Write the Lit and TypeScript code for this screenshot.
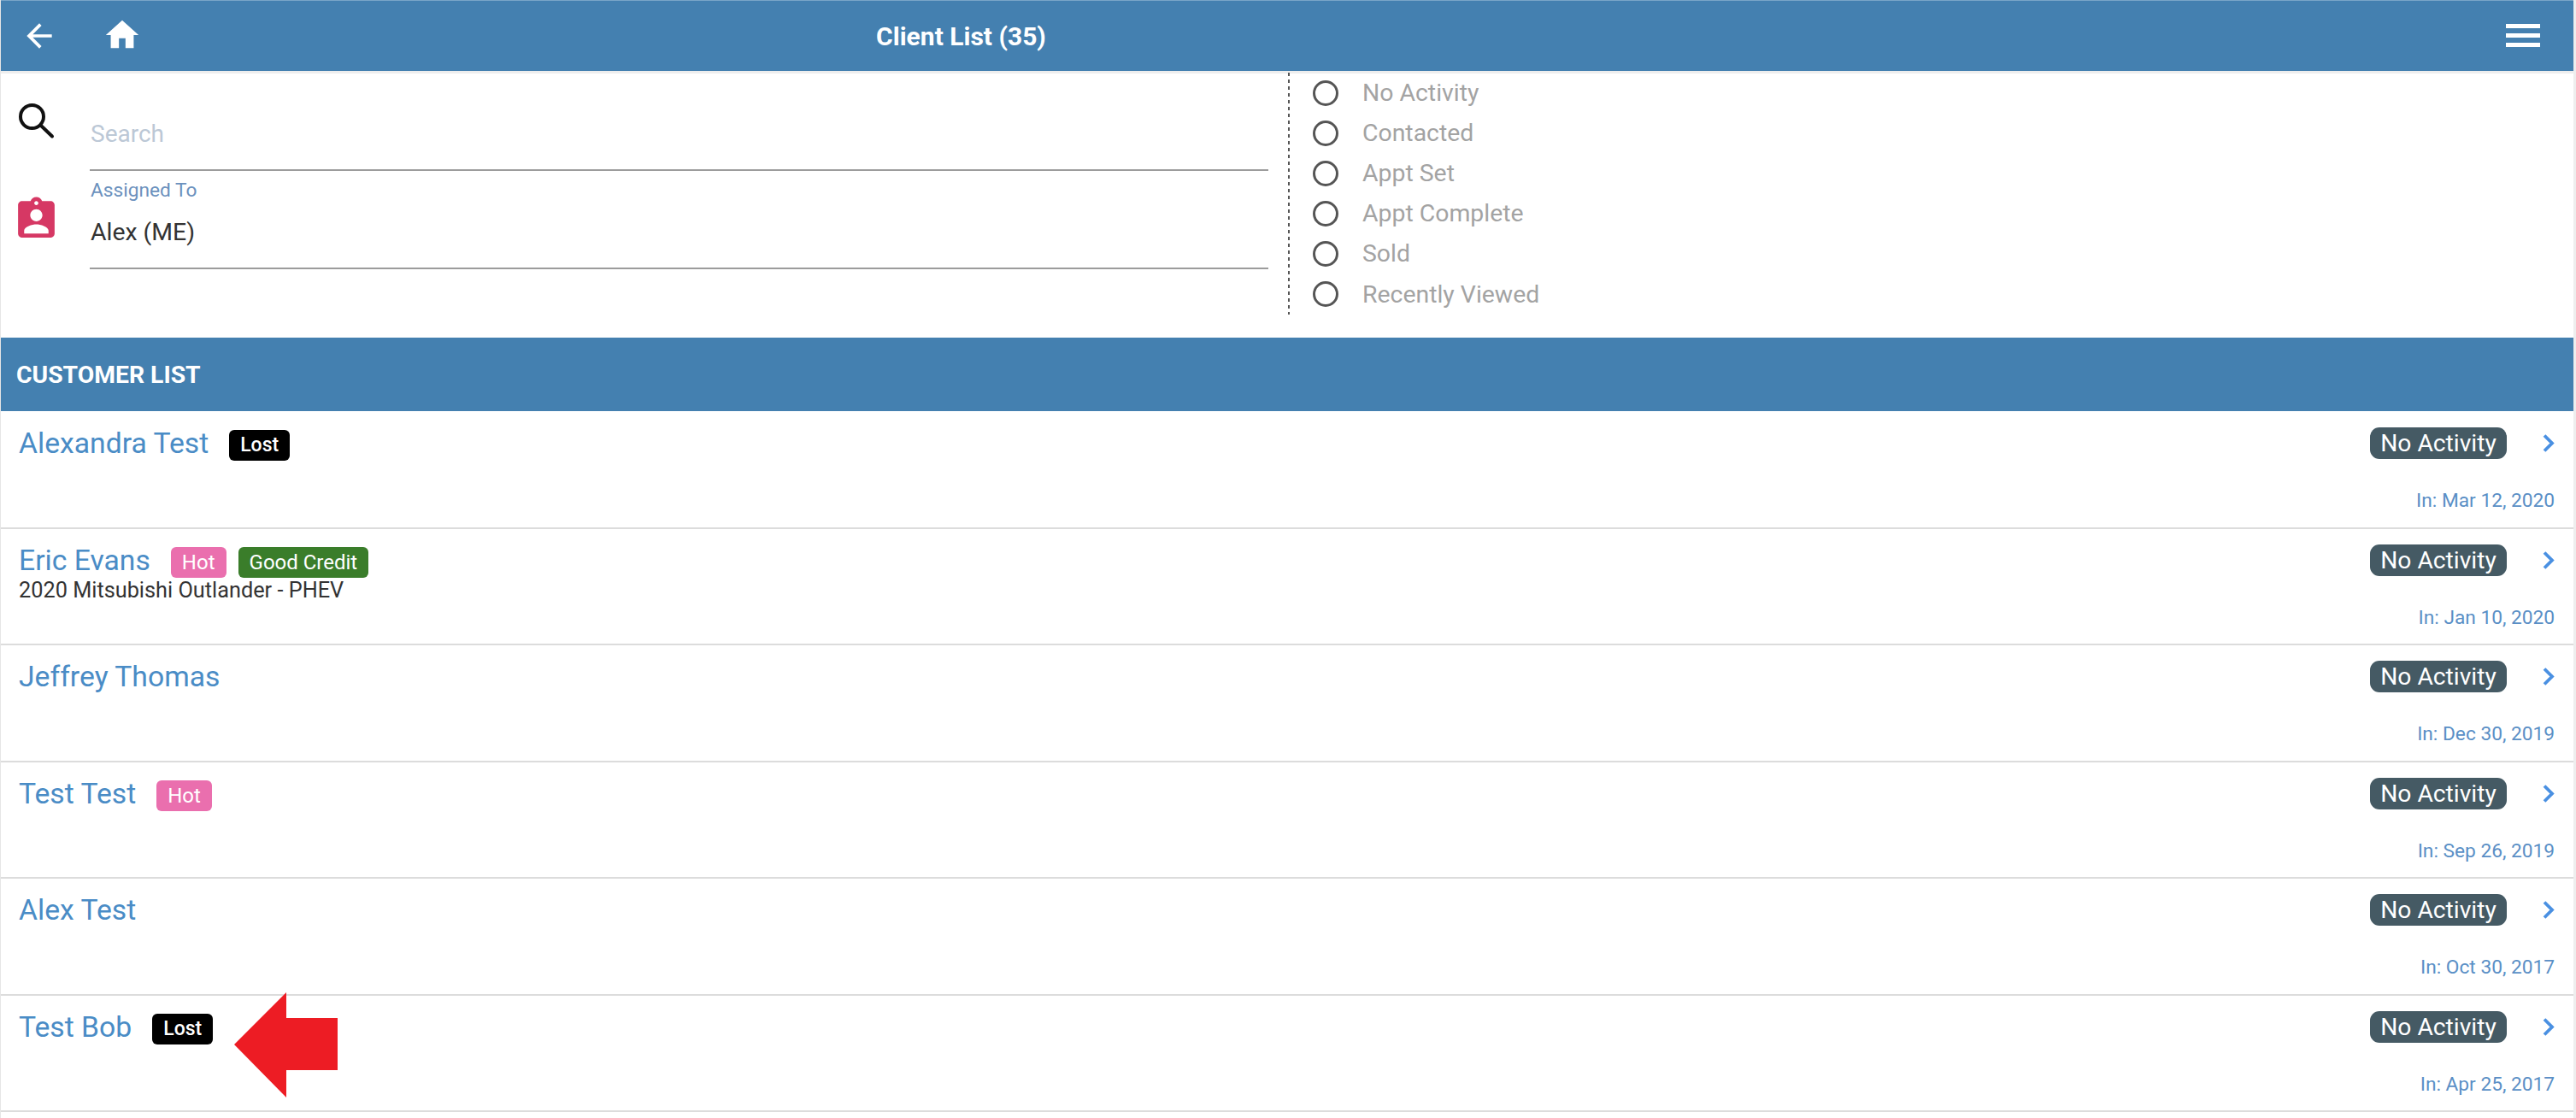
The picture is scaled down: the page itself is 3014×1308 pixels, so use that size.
import { LitElement, html, css } from "lit";
import { customElement } from "lit/decorators.js";

const rows = [
  { name: "Alexandra Test", tags: [["Lost", "lost"]], sub: "", date: "In: Mar 12, 2020" },
  { name: "Eric Evans", tags: [["Hot", "hot"], ["Good Credit", "credit"]], sub: "2020 Mitsubishi Outlander - PHEV", date: "In: Jan 10, 2020" },
  { name: "Jeffrey Thomas", tags: [], sub: "", date: "In: Dec 30, 2019" },
  { name: "Test Test", tags: [["Hot", "hot"]], sub: "", date: "In: Sep 26, 2019" },
  { name: "Alex Test", tags: [], sub: "", date: "In: Oct 30, 2017" },
  { name: "Test Bob", tags: [["Lost", "lost"]], sub: "", date: "In: Apr 25, 2017" },
];
const filters = ["No Activity", "Contacted", "Appt Set", "Appt Complete", "Sold", "Recently Viewed"];

@customElement("app-root")
export class AppRoot extends LitElement {
  static styles = css`
    :host { display: block; font-family: Roboto, "Liberation Sans", sans-serif; background: #fff; }
    .page { position: relative; width: 3014px; height: 1308px; overflow: hidden; box-sizing: border-box;
      border-left: 1px solid #e6e6e6; border-right: 3px solid #eeeeee; }
    .top { height: 83px; box-sizing: border-box; background: #4480b0; border-top: 1px solid #7aa5c8; display: flex; align-items: center; color: #fff; }
    .top svg { fill: #fff; display: block; flex: none; }
    .back { width: 44px; height: 44px; margin-left: 23px; }
    .home { width: 46px; height: 46px; margin-left: 52px; margin-top: -3px; }
    .title { flex: 1; text-align: center; font-size: 30px; font-weight: 700; padding-right: 849px; }
    .burger { width: 40px; margin-right: 39px; display: flex; flex-direction: column; gap: 6px; margin-top: -1px; }
    .burger i { display: block; height: 5px; background: #fff; }
    .filters { height: 312px; box-sizing: border-box; border-top: 3px solid #eeeeee; display: flex; }
    .left { width: 1506px; flex: none; box-sizing: border-box; padding-right: 23px; display: grid; grid-template-columns: 104px 1fr; grid-template-rows: 114px 115px; }
    .ico svg { display: block; width: 57px; height: 57px; }
    .ico { padding-left: 13px; }
    .ico.s { padding-top: 27px; }
    .ico.b { padding-top: 28px; }
    .ico.s svg { fill: none; stroke: #111; stroke-width: 4px; stroke-linecap: round; }
    .ico.b svg { fill: #d63864; }
    .field { border-bottom: 2px solid #9c9c9c; box-sizing: border-box; }
    .search { padding: 53px 0 0 1px; font-size: 28px; line-height: 36px; color: #bcc8d6; }
    .assigned { padding-left: 1px; }
    .assigned small { display: block; font-size: 22.7px; line-height: 26px; color: #6b91bd; margin-top: 10px; }
    .assigned span { display: block; font-size: 28.4px; line-height: 36px; color: #333; margin-top: 18px; }
    .radios { height: 283px; box-sizing: border-box; padding: 0 0 0 28px; display: flex; flex-direction: column; margin-top: -1px;
      background-image: repeating-linear-gradient(to bottom, #555 0 4px, transparent 4px 8px); background-size: 2px 100%; background-repeat: no-repeat; }
    .radio { height: 47.1px; display: flex; align-items: center; font-size: 28.4px; color: #a3a3a3; flex: none; }
    .radio i { display: block; width: 30px; height: 30px; box-sizing: border-box; border: 3px solid #555; border-radius: 50%; margin-right: 28px; flex: none; margin-left: 1px; }
    .head { height: 86px; background: #4480b0; color: #fff; font-weight: 700; font-size: 28.3px; display: flex; align-items: center; padding-left: 18px; padding-top: 1px; box-sizing: border-box; }
    .list { padding-top: 1px; }
    .row { height: 136.5px; box-sizing: border-box; border-bottom: 2px solid #dcdcdc; display: flex; justify-content: space-between; padding: 17px 22px 0 21px; }
    .line { display: flex; align-items: flex-start; }
    .name { font-size: 33.7px; line-height: 40px; color: #4a8cc6; margin-right: 24px; }
    .tag { font-size: 24px; line-height: 36px; height: 36px; border-radius: 6px; padding: 0 13px; color: #fff; margin: 4px 14px 0 0; }
    .lost { background: #000; font-weight: 500; font-size: 23px; }
    .hot { background: #ea6fae; }
    .credit { background: #3a7d2a; }
    .sub { font-size: 25.3px; line-height: 28px; color: #333; margin-top: 1px; }
    .right { display: flex; flex-direction: column; align-items: flex-end; }
    .stat { display: flex; align-items: center; }
    .pill { background: #455a64; color: #fff; font-size: 28.2px; line-height: 37px; height: 37px; width: 160px; text-align: center; border-radius: 11px; margin-top: 1px; }
    .chev { width: 36px; height: 36px; fill: none; stroke: #4a90e2; stroke-width: 3.8px; margin: 0 -12px 0 32px; display: block; }
    .date { font-size: 22.7px; line-height: 28px; color: #5a8fc6; margin-top: 35px; }
    .arrow { position: absolute; left: 273px; top: 1161px; width: 121px; height: 123px; }
    .arrow polygon { fill: #ed1c24; }
  `;

  render() {
    return html`<div class="page">
      <div class="top">
        <svg class="back" viewBox="0 0 24 24"><path d="M20 11H7.83l5.59-5.59L12 4l-8 8 8 8 1.41-1.41L7.83 13H20v-2z"/></svg>
        <svg class="home" viewBox="0 0 24 24"><path d="M10 20v-6h4v6h5v-8h3L12 3 2 12h3v8z"/></svg>
        <div class="title">Client List (35)</div>
        <div class="burger"><i></i><i></i><i></i></div>
      </div>
      <div class="filters">
        <div class="left">
          <div class="ico s"><svg viewBox="0 0 57 57"><circle cx="23.5" cy="23.5" r="13.5"/><path d="M33.5 33.5 L47 46.5"/></svg></div>
          <div class="field search">Search</div>
          <div class="ico b"><svg viewBox="0 0 24 24"><path d="M19 3h-4.18C14.4 1.84 13.3 1 12 1c-1.3 0-2.4.84-2.82 2H5c-1.1 0-2 .9-2 2v14c0 1.1.9 2 2 2h14c1.1 0 2-.9 2-2V5c0-1.1-.9-2-2-2zm-7 0c.55 0 1 .45 1 1s-.45 1-1 1-1-.45-1-1 .45-1 1-1zm0 4c1.66 0 3 1.34 3 3s-1.34 3-3 3-3-1.34-3-3 1.34-3 3-3zm6 12H6v-1.4c0-2 4-3.1 6-3.1s6 1.1 6 3.1V19z"/></svg></div>
          <div class="field assigned"><small>Assigned To</small><span>Alex (ME)</span></div>
        </div>
        <div class="radios">
          ${filters.map((f) => html`<div class="radio"><i></i>${f}</div>`)}
        </div>
      </div>
      <div class="head">CUSTOMER LIST</div>
      <div class="list">
      ${rows.map((r) => html`<div class="row">
        <div>
          <div class="line"><div class="name">${r.name}</div>${r.tags.map((t) => html`<div class="tag ${t[1]}">${t[0]}</div>`)}</div>
          ${r.sub ? html`<div class="sub">${r.sub}</div>` : ""}
        </div>
        <div class="right">
          <div class="stat"><div class="pill">No Activity</div>
            <svg class="chev" viewBox="0 0 36 36"><path d="M12 9.5 L21 18.5 L12 27.5"/></svg></div>
          <div class="date">${r.date}</div>
        </div>
      </div>`)}
      </div>
      <svg class="arrow" viewBox="0 0 121 123"><polygon points="0,61 61,0 61,30 121,30 121,91 61,91 61,123"/></svg>
    </div>`;
  }
}
